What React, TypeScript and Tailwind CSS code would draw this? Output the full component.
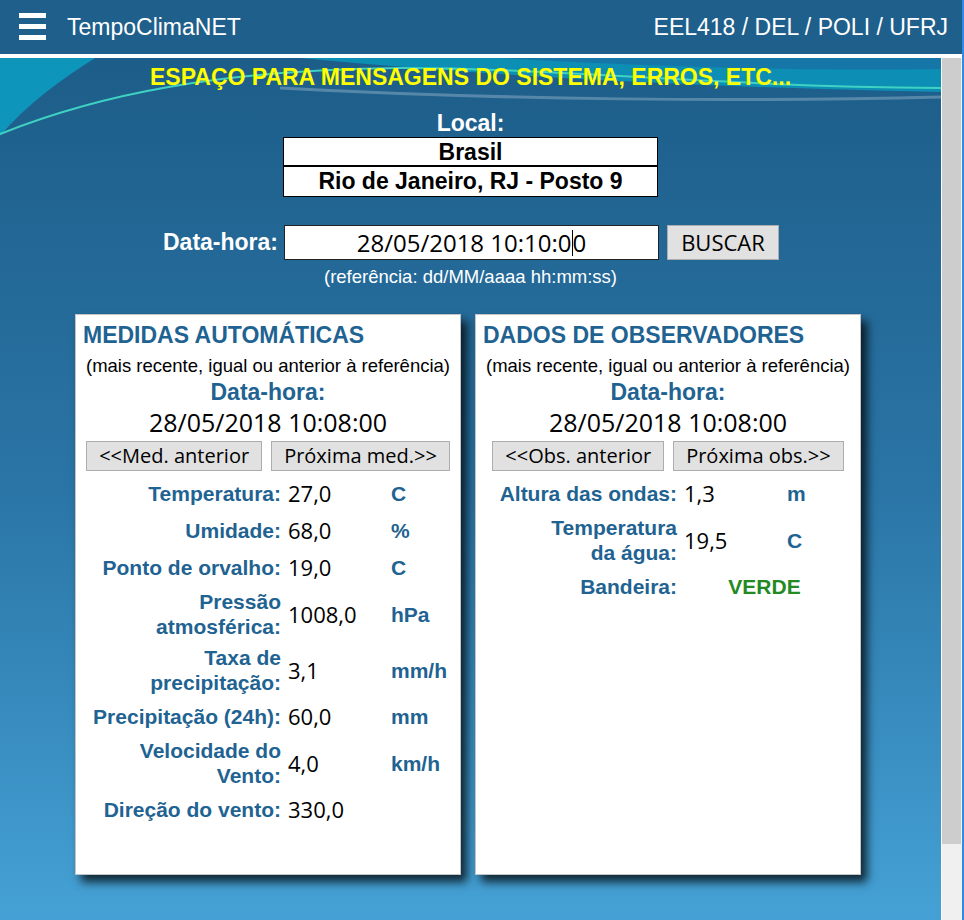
import React from 'react';

type Row = { label: React.ReactNode; value?: string; unit?: string; flag?: string };

const medidas: Row[] = [
  { label: 'Temperatura:', value: '27,0', unit: 'C' },
  { label: 'Umidade:', value: '68,0', unit: '%' },
  { label: 'Ponto de orvalho:', value: '19,0', unit: 'C' },
  { label: <>Pressão<br />atmosférica:</>, value: '1008,0', unit: 'hPa' },
  { label: <>Taxa de<br />precipitação:</>, value: '3,1', unit: 'mm/h' },
  { label: 'Precipitação (24h):', value: '60,0', unit: 'mm' },
  { label: <>Velocidade do<br />Vento:</>, value: '4,0', unit: 'km/h' },
  { label: 'Direção do vento:', value: '330,0' },
];

const observacoes: Row[] = [
  { label: 'Altura das ondas:', value: '1,3', unit: 'm' },
  { label: <>Temperatura<br />da água:</>, value: '19,5', unit: 'C' },
  { label: 'Bandeira:', flag: 'VERDE' },
];

const Card: React.FC<{ title: string; prev: string; next: string; rows: Row[]; labelCol: string }> = ({
  title,
  prev,
  next,
  rows,
  labelCol,
}) => {
  return (
    <div className="w-[386px] h-[561px] bg-white border border-[#c4c4c4] shadow-[6px_7px_9px_rgba(0,0,0,0.75)] flex flex-col">
      <h2 className="pl-[7px] pt-[7px] text-[23px] leading-[26px] font-bold text-[#1f6392]">{title}</h2>
      <p className="mt-[7px] text-center text-[18.5px] leading-[22px] text-black">
        (mais recente, igual ou anterior à referência)
      </p>
      <p className="mt-[2px] text-center text-[23px] leading-[26px] font-bold text-[#1f6392]">Data-hora:</p>
      <p className="mt-[2px] text-center font-['Open_Sans',sans-serif] text-[25px] leading-[30px] text-black">
        28/05/2018 10:08:00
      </p>

      {/* navegação */}
      <div className="mt-[4px] flex justify-center gap-[9px] font-['Open_Sans',sans-serif] text-[20px] text-black">
        <button className="h-[30px] px-[12px] bg-[#e1e1e1] border border-[#adadad] leading-none">{prev}</button>
        <button className="h-[30px] px-[12px] bg-[#e1e1e1] border border-[#adadad] leading-none">{next}</button>
      </div>

      <div className={`mt-[4px] pl-[7px] grid ${labelCol} items-center`}>
        {rows.map((r, i) => (
          <React.Fragment key={i}>
            <div className="py-[3px] pr-[7px] text-right text-[21px] leading-[25px] font-bold text-[#1f6392]">{r.label}</div>
            {r.flag ? (
              <div className="col-span-2 py-[3px] text-center text-[21px] leading-[31px] font-bold text-[#238a23]">
                {r.flag}
              </div>
            ) : (
              <>
                <div className="py-[3px] font-['Open_Sans',sans-serif] text-[22px] leading-[31px] text-black">{r.value}</div>
                <div className="py-[3px] text-[21px] leading-[25px] font-bold text-[#1f6392]">{r.unit}</div>
              </>
            )}
          </React.Fragment>
        ))}
      </div>
    </div>
  );
};

const App: React.FC = () => {
  return (
    <div className="w-[964px] h-[920px] flex font-['Liberation_Sans',Arial,sans-serif] overflow-hidden">
      <div className="w-[962px] flex flex-col">
        {/* Header */}
        <header className="h-[54px] bg-[#1f5f8b] flex items-center pl-[19px] pr-[14px] text-white">
          <div className="w-[27px] flex flex-col gap-[6px] -mt-[2px]">
            <span className="h-[5px] bg-white" />
            <span className="h-[5px] bg-white" />
            <span className="h-[5px] bg-white" />
          </div>
          <span className="ml-[21px] text-[23px]">TempoClimaNET</span>
          <span className="ml-auto text-[23px]">EEL418 / DEL / POLI / UFRJ</span>
        </header>
        <div className="h-[4px] bg-white" />

        <div className="flex flex-1">
          {/* Content */}
          <main className="relative w-[941px] h-[862px] overflow-hidden bg-gradient-to-b from-[#1d5d89] via-[#2a75a6] to-[#45a1d5]">
            <svg className="absolute left-0 top-0 pointer-events-none" width="941" height="140" viewBox="0 0 941 140">
              <path d="M0,0 H95 C60,22 25,48 0,78 Z" fill="#0c9bc0" opacity="0.9" />
              <path d="M300,0 H941 V34 C760,30 560,24 300,0 Z" fill="#0a96bb" opacity="0.85" />
              <path d="M500,0 C650,9 800,13 941,11 V0 Z" fill="#1a6ca2" opacity="0.7" />
              <path d="M0,76 C100,36 220,12 400,10 C560,10 700,28 941,30" fill="none" stroke="#3fd2c2" strokeWidth="2" />
              <path d="M280,30 C500,42 750,44 941,39" fill="none" stroke="#ffffff" strokeOpacity="0.25" strokeWidth="3" />
            </svg>

            <div className="relative flex flex-col items-center">
              <p className="pt-[6px] text-[23px] leading-[26px] font-bold text-[#ffff00]">
                ESPAÇO PARA MENSAGENS DO SISTEMA, ERROS, ETC...
              </p>

              <p className="mt-[20px] text-[23px] leading-[26px] font-bold text-white">Local:</p>
              <div className="mt-[1px] w-[375px] bg-white border border-black text-[23px] font-bold text-black text-center">
                <div className="h-[29px] leading-[29px] border-b-2 border-black">Brasil</div>
                <div className="h-[29px] leading-[29px]">Rio de Janeiro, RJ - Posto 9</div>
              </div>

              <div className="mt-[28px] flex items-center">
                <span className="w-[116px] text-right text-[23px] font-bold text-white">Data-hora:</span>
                <div className="ml-[6px] w-[375px] h-[35px] bg-white border border-[#222] flex items-center justify-center font-['Open_Sans',sans-serif] text-[24px] text-black">
                  28/05/2018 10:10:0
                  <span className="inline-block w-px h-[26px] bg-black" />0
                </div>
                <button className="ml-[8px] w-[112px] h-[35px] bg-[#e1e1e1] border border-[#adadad] font-['Open_Sans',sans-serif] text-[22px] text-black">
                  BUSCAR
                </button>
              </div>
              <p className="mt-[6px] text-[18.5px] leading-[22px] text-white">(referência: dd/MM/aaaa hh:mm:ss)</p>

              <div className="mt-[26px] pr-[5px] flex gap-[14px]">
                <Card
                  title="MEDIDAS AUTOMÁTICAS"
                  prev="<<Med. anterior"
                  next="Próxima med.>>"
                  rows={medidas}
                  labelCol="grid-cols-[205px_103px_58px]"
                />
                <Card
                  title="DADOS DE OBSERVADORES"
                  prev="<<Obs. anterior"
                  next="Próxima obs.>>"
                  rows={observacoes}
                  labelCol="grid-cols-[201px_103px_58px]"
                />
              </div>
            </div>
          </main>

          {/* Scrollbar */}
          <div className="w-[21px] border-l border-white bg-[#f0f0f0]">
            <div className="w-[19px] h-[786px] bg-[#cdcdcd]" />
          </div>
        </div>
      </div>
      <div className="w-[2px] bg-[#2f8be3]" />
    </div>
  );
};

export default App;
